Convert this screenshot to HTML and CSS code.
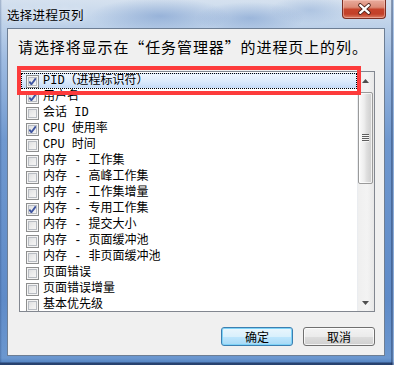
FILE: index.html
```html
<!DOCTYPE html>
<html lang="zh-CN">
<head>
  <meta charset="UTF-8" />
  <title>选择进程页列</title>
  <link rel="stylesheet" href="styles.css">
</head>
<body>
  <div class="window">
    <div class="titlebar">
      <span class="title">选择进程页列</span>
      <div class="close">
        <svg width="44" height="18" viewBox="0 0 44 18">
          <path d="M18 5 L27 13 M27 5 L18 13" stroke="#4a2018" stroke-width="4.2" stroke-linecap="round" />
          <path d="M18 5 L27 13 M27 5 L18 13" stroke="#fff" stroke-width="2.4" stroke-linecap="round" />
        </svg>
      </div>
    </div>

    <div class="client">
      <p class="prompt">请选择将显示在“任务管理器”的进程页上的列。</p>

      <div class="listbox">
        <ul class="items">
          <li class="item selected"><span class="cb checked"></span>PID（进程标识符）</li>
          <li class="item"><span class="cb checked"></span>用户名</li>
          <li class="item"><span class="cb"></span>会话 ID</li>
          <li class="item"><span class="cb checked"></span>CPU 使用率</li>
          <li class="item"><span class="cb"></span>CPU 时间</li>
          <li class="item"><span class="cb"></span>内存 - 工作集</li>
          <li class="item"><span class="cb"></span>内存 - 高峰工作集</li>
          <li class="item"><span class="cb"></span>内存 - 工作集增量</li>
          <li class="item"><span class="cb checked"></span>内存 - 专用工作集</li>
          <li class="item"><span class="cb"></span>内存 - 提交大小</li>
          <li class="item"><span class="cb"></span>内存 - 页面缓冲池</li>
          <li class="item"><span class="cb"></span>内存 - 非页面缓冲池</li>
          <li class="item"><span class="cb"></span>页面错误</li>
          <li class="item"><span class="cb"></span>页面错误增量</li>
          <li class="item"><span class="cb"></span>基本优先级</li>
        </ul>
        <div class="scrollbar">
          <div class="sb-btn">
            <svg width="7" height="4" viewBox="0 0 7 4"><polygon points="0,4 3.5,0 7,4" fill="#4f4f4f" /></svg>
          </div>
          <div class="sb-track">
            <div class="thumb"><span class="grip"></span></div>
          </div>
          <div class="sb-btn">
            <svg width="7" height="4" viewBox="0 0 7 4"><polygon points="0,0 7,0 3.5,4" fill="#4f4f4f" /></svg>
          </div>
        </div>
      </div>

      <div class="buttons">
        <button class="btn default">确定</button>
        <button class="btn">取消</button>
      </div>

      <!-- annotation box drawn over the first row -->
      <div class="annot"></div>
    </div>
  </div>
</body>
</html>
```

FILE: styles.css
```css
* {
  margin: 0;
  padding: 0;
  box-sizing: border-box;
}

body {
  width: 394px;
  height: 365px;
  overflow: hidden;
  font-family: "Noto Sans CJK SC", sans-serif;
}

.window {
  width: 394px;
  height: 365px;
  display: flex;
  flex-direction: column;
  background:
    linear-gradient(to right, rgba(40, 70, 120, 0.35) 0, transparent 2px, transparent 391px, rgba(25, 45, 85, 0.8) 392px, rgba(160, 190, 230, 0.6) 393px),
    linear-gradient(to bottom, transparent 362px, rgba(30, 50, 90, 0.8) 363px, rgba(30, 50, 90, 0.8) 365px),
    radial-gradient(ellipse 70px 18px at 160px 16px, rgba(95, 135, 195, 0.45), transparent),
    radial-gradient(ellipse 55px 16px at 250px 18px, rgba(95, 135, 195, 0.4), transparent),
    radial-gradient(ellipse 40px 14px at 310px 10px, rgba(120, 155, 205, 0.35), transparent),
    linear-gradient(to bottom, #d5e1ef 0, #bdd1e9 26px, #9ebbe1 60px, #6f98cf 140px, #5f8bc8 300px, #6b97cf 358px, #4e7fc0 364px);
}

.titlebar {
  height: 28px;
  display: flex;
  justify-content: space-between;
  align-items: flex-start;
  padding-left: 7px;
}

.title {
  padding-top: 7px;
  font-size: 12.5px;
  line-height: 16px;
  letter-spacing: 0.3px;
  color: #000;
  text-shadow: 0 0 6px rgba(255, 255, 255, 0.9);
}

.close {
  width: 44px;
  height: 19px;
  margin-right: 8px;
  border: 1px solid #7a2f24;
  border-top: none;
  border-radius: 0 0 4px 4px;
  background: linear-gradient(to bottom, #e9ab9c 0, #dc8c78 40%, #c6432b 52%, #c24029 78%, #dc7e64 100%);
  box-shadow: inset 0 0 0 1px rgba(255, 210, 200, 0.45);
  display: flex;
  align-items: center;
  justify-content: center;
}

.client {
  position: relative;
  flex: 1;
  margin: 0 9px 9px 7px;
  border: 1px solid #6d7e94;
  background: #f0f0f0;
  padding-top: 8px;
  display: flex;
  flex-direction: column;
}

.prompt {
  padding-left: 10px;
  font-size: 15px;
  line-height: 20px;
  letter-spacing: 0.9px;
  color: #000;
}

.listbox {
  margin: 14px 9px 0 11px;
  height: 241px;
  border: 1px solid #828790;
  background: #fff;
  display: flex;
}

.items {
  flex: 1;
  list-style: none;
  padding: 1px 0 0 1px;
  overflow: hidden;
}

.item {
  height: 16px;
  display: flex;
  align-items: center;
  padding-left: 4px;
  border: 1px solid transparent;
  font-family: "Liberation Mono", "Noto Sans CJK SC", monospace;
  font-size: 12px;
  line-height: 14px;
  color: #000;
  white-space: nowrap;
}

.item.selected {
  border: 1px dotted #000;
  background: linear-gradient(to bottom, #eef5fe 0, #dcebfc 50%, #c6dcf8 100%);
}

.cb {
  width: 13px;
  height: 13px;
  margin-right: 4px;
  flex-shrink: 0;
  border: 1px solid #8e8f8f;
  background: linear-gradient(135deg, #d6d8db 0, #ececec 50%, #fafafa 100%);
  box-shadow: inset 0 0 0 1px #f4f4f4, inset 0 0 0 2px #b8bcc2;
}

.cb.checked {
  background:
    url("data:image/svg+xml,%3Csvg xmlns='http://www.w3.org/2000/svg' width='11' height='11'%3E%3Cpath d='M2.3 5.6 L4.4 8.2 L8.8 2.4' fill='none' stroke='%233f55a0' stroke-width='1.9'/%3E%3C/svg%3E") center / 11px 11px no-repeat,
    linear-gradient(135deg, #d6d8db 0, #ececec 50%, #fafafa 100%);
}

.scrollbar {
  width: 17px;
  display: flex;
  flex-direction: column;
  background: linear-gradient(to right, #e6ebf2 0, #efefef 1px, #f3f3f3 60%, #e8e8e8 100%);
}

.sb-btn {
  height: 17px;
  display: flex;
  align-items: center;
  justify-content: center;
}

.sb-track {
  flex: 1;
  padding: 3px 1px 0;
}

.thumb {
  height: 92px;
  border: 1px solid #9a9a9a;
  border-radius: 2px;
  background: linear-gradient(to right, #fbfbfb 0, #ededed 40%, #dedede 60%, #cdcdcd 100%);
  box-shadow: inset 0 0 0 1px rgba(255, 255, 255, 0.7);
  display: flex;
  align-items: center;
  justify-content: center;
}

.grip {
  width: 7px;
  height: 8px;
  background: repeating-linear-gradient(to bottom, #5e5e5e 0, #5e5e5e 1px, #f6f6f6 1px, #f6f6f6 2px);
}

.buttons {
  margin-top: 15px;
  padding-right: 9px;
  display: flex;
  justify-content: flex-end;
  gap: 10px;
}

.btn {
  width: 72px;
  height: 19px;
  border: 1px solid #707070;
  border-radius: 3px;
  background: linear-gradient(to bottom, #f3f3f3 0, #ebebeb 50%, #dddddd 51%, #cfcfcf 100%);
  box-shadow: inset 0 0 0 1px rgba(255, 255, 255, 0.75);
  font-family: "Noto Sans CJK SC", sans-serif;
  font-size: 12px;
  line-height: 16px;
  color: #000;
}

.btn.default {
  border-color: #3c7fb1;
  background: linear-gradient(to bottom, #eaf6fd 0, #d9f0fc 50%, #bee6fd 51%, #a7d9f5 100%);
  box-shadow: inset 0 0 0 1px #7fd3f7;
}

.annot {
  position: absolute;
  left: 9px;
  top: 37px;
  width: 344px;
  height: 29px;
  border: 4px solid #fd3b3b;
}
```
